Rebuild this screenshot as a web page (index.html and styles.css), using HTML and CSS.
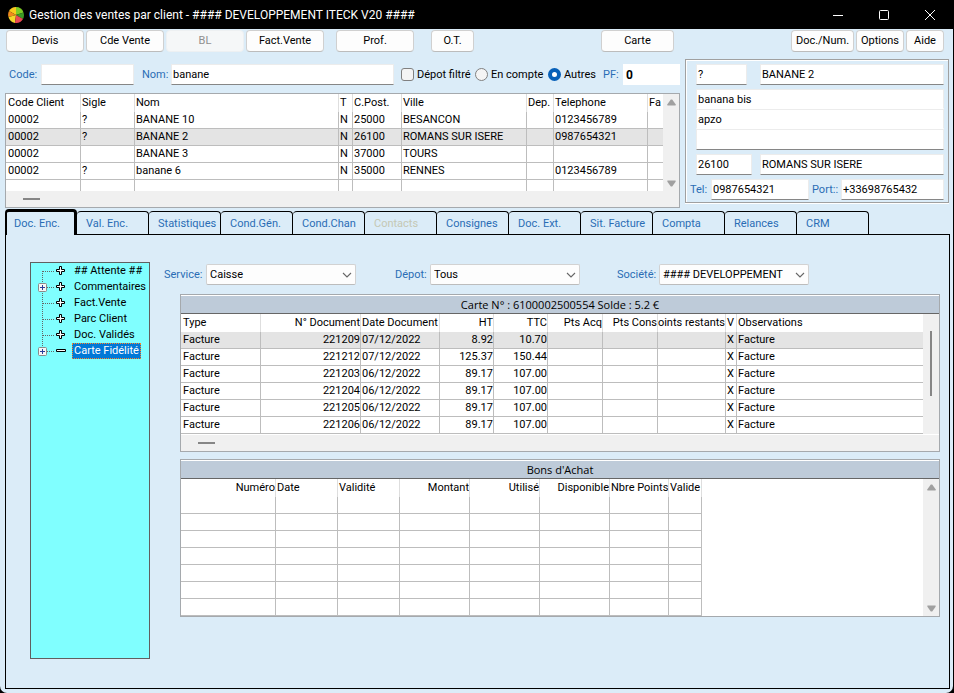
FILE: index.html
```html
<!DOCTYPE html>
<html lang="fr">
<head>
<meta charset="utf-8">
<title>Gestion des ventes par client</title>
<link rel="stylesheet" href="styles.css">
</head>
<body>
<svg class="defs" width="0" height="0" aria-hidden="true">
  <symbol id="chevron" viewBox="0 0 10 6"><path d="M1 1l4 4 4-4" fill="none" stroke="#666" stroke-width="1.1"/></symbol>
  <symbol id="arrow-up" viewBox="0 0 9 7"><path d="M3.8.6h1.4l3.4 4.6v1.2H.4V5.200z" fill="#a0a0a0"/></symbol>
  <symbol id="arrow-down" viewBox="0 0 9 7"><path d="M3.800 6.400h1.400L8.600 1.800V.6H.4v1.200z" fill="#a0a0a0"/></symbol>
  <symbol id="plus" viewBox="0 0 38 16"><path d="M28.500 3.500h2v3h3v2h-3v3h-2v-3h-3v-2h3z" fill="#fff" stroke="#000"/></symbol>
  <symbol id="minus" viewBox="0 0 38 16"><path d="M25.500 6.500h9v2h-9z" fill="#fff" stroke="#000"/></symbol>
  <symbol id="branch" viewBox="0 0 38 16"><path d="M12 8.500h11" stroke="#666" stroke-dasharray="1 1"/></symbol>
  <symbol id="down" viewBox="0 0 38 16"><path d="M11.500 8v8" stroke="#666" stroke-dasharray="1 1"/></symbol>
  <symbol id="up" viewBox="0 0 38 16"><path d="M11.500 0v8" stroke="#666" stroke-dasharray="1 1"/></symbol>
  <symbol id="box" viewBox="0 0 38 16"><rect x="7.500" y="4.500" width="8" height="8" rx="1" fill="#f6f6f6" stroke="#8a8a8a"/><path d="M9 8.500h5M11.500 6v5" stroke="#2a3f9a"/></symbol>
</svg>
<div class="window">
  <header class="titlebar">
    <svg class="logo" viewBox="0 0 16 16" aria-hidden="true">
      <path d="M8 8V0A8 8 0 0 0 1 4z" fill="#f7c81e"/><path d="M8 8L1 4a8 8 0 0 0-.5 6z" fill="#f08a1c"/>
      <path d="M8 8L.5 10A8 8 0 0 0 7 15.900z" fill="#f3d52a"/><path d="M8 8V0a8 8 0 0 1 7.500 5.500z" fill="#7ccb25"/>
      <path d="M8 8l7.500-2.500A8 8 0 0 1 15 12z" fill="#3c9a24"/><path d="M8 8l7 4a8 8 0 0 1-8 3.900z" fill="#ea4a54"/>
    </svg>
    <h1>Gestion des ventes par client - #### DEVELOPPEMENT ITECK V20 ####</h1>
    <div class="win-buttons">
      <button type="button" aria-label="Réduire"><svg viewBox="0 0 12 12"><path d="M1 6.500h10" stroke="#fff"/></svg></button>
      <button type="button" aria-label="Agrandir"><svg viewBox="0 0 12 12"><rect x="1.500" y="1.500" width="9" height="9" rx="1" fill="none" stroke="#fff"/></svg></button>
      <button type="button" aria-label="Fermer"><svg viewBox="0 0 12 12"><path d="M1 1l10 10M11 1L1 11" stroke="#fff"/></svg></button>
    </div>
  </header>
  <div class="client">
    <nav class="toolbar">
      <button type="button">Devis</button>
      <button type="button">Cde Vente</button>
      <button type="button" disabled>BL</button>
      <button type="button">Fact.Vente</button>
      <button type="button" class="prof">Prof.</button>
      <button type="button" class="ot">O.T.</button>
      <button type="button" class="carte">Carte</button>
      <button type="button" class="docnum">Doc./Num.</button>
      <button type="button" class="options">Options</button>
      <button type="button" class="aide">Aide</button>
    </nav>

    <div class="upper">
      <section class="search">
        <form class="filters">
          <label for="code" class="l-code">Code:</label><input id="code" class="code" type="text">
          <label for="nom" class="l-nom">Nom:</label><input id="nom" class="grow" type="text" value="banane">
          <label class="choice first"><input type="checkbox">Dépot filtré</label>
          <label class="choice second"><input type="radio" name="mode">En compte</label>
          <label class="choice third"><input type="radio" name="mode" checked>Autres</label>
          <label for="pf" class="l-pf">PF:</label><input id="pf" class="pf" type="text" value="0">
        </form>
        <div class="grid">
          <div class="body">
            <table class="clients">
              <colgroup><col class="w75"><col class="w54"><col><col class="w14"><col class="w49"><col class="w125"><col class="w27"><col class="w94"><col class="w15"></colgroup>
              <thead><tr><th>Code Client</th><th>Sigle</th><th>Nom</th><th>T</th><th>C.Post.</th><th>Ville</th><th>Dep.</th><th>Telephone</th><th>Fa</th></tr></thead>
              <tbody>
                <tr><td>00002</td><td>?</td><td>BANANE 10</td><td>N</td><td>25000</td><td>BESANCON</td><td></td><td>0123456789</td><td></td></tr>
                <tr class="sel"><td>00002</td><td>?</td><td>BANANE 2</td><td>N</td><td>26100</td><td>ROMANS SUR ISERE</td><td></td><td>0987654321</td><td></td></tr>
                <tr><td>00002</td><td></td><td>BANANE 3</td><td>N</td><td>37000</td><td>TOURS</td><td></td><td></td><td></td></tr>
                <tr><td>00002</td><td>?</td><td>banane 6</td><td>N</td><td>35000</td><td>RENNES</td><td></td><td>0123456789</td><td></td></tr>
                <tr class="cut"><td></td><td></td><td></td><td></td><td></td><td></td><td></td><td></td><td></td></tr>
              </tbody>
            </table>
            <div class="vbar"><svg><use href="#arrow-up"/></svg><svg><use href="#arrow-down"/></svg></div>
          </div>
          <div class="hbar"><i></i></div>
        </div>
      </section>

      <section class="card">
        <div class="line"><input class="sigle" type="text" value="?" aria-label="Sigle"><input class="grow" type="text" value="BANANE 2" aria-label="Nom du client"></div>
        <div class="address">
          <input type="text" value="banana bis" aria-label="Adresse 1">
          <input type="text" value="apzo" aria-label="Adresse 2">
          <input type="text" aria-label="Adresse 3">
        </div>
        <div class="line"><input class="cp" type="text" value="26100" aria-label="Code postal"><input class="grow" type="text" value="ROMANS SUR ISERE" aria-label="Ville"></div>
        <div class="phones">
          <label for="tel">Tel:</label><input id="tel" class="tel" type="text" value="0987654321">
          <label for="port" class="l-port">Port::</label><input id="port" class="grow" type="text" value="+33698765432">
        </div>
      </section>
    </div>

    <div class="tabs" role="tablist">
      <button type="button" role="tab" aria-selected="true">Doc. Enc.</button>
      <button type="button" role="tab">Val. Enc.</button>
      <button type="button" role="tab">Statistiques</button>
      <button type="button" role="tab">Cond.Gén.</button>
      <button type="button" role="tab">Cond.Chan</button>
      <button type="button" role="tab" disabled>Contacts</button>
      <button type="button" role="tab">Consignes</button>
      <button type="button" role="tab">Doc. Ext.</button>
      <button type="button" role="tab">Sit. Facture</button>
      <button type="button" role="tab">Compta</button>
      <button type="button" role="tab">Relances</button>
      <button type="button" role="tab">CRM</button>
    </div>

    <main class="panel">
      <ul class="tree">
        <li><svg><use href="#down"/><use href="#branch"/><use href="#plus"/></svg><span>## Attente ##</span></li>
        <li><svg><use href="#up"/><use href="#down"/><use href="#branch"/><use href="#box"/><use href="#plus"/></svg><span>Commentaires</span></li>
        <li><svg><use href="#up"/><use href="#down"/><use href="#branch"/><use href="#plus"/></svg><span>Fact.Vente</span></li>
        <li><svg><use href="#up"/><use href="#down"/><use href="#branch"/><use href="#plus"/></svg><span>Parc Client</span></li>
        <li><svg><use href="#up"/><use href="#down"/><use href="#branch"/><use href="#plus"/></svg><span>Doc. Validés</span></li>
        <li class="current"><svg><use href="#up"/><use href="#branch"/><use href="#box"/><use href="#minus"/></svg><span>Carte Fidélité</span></li>
      </ul>

      <div class="content">
        <form class="selects">
          <label for="service" class="l-service">Service:</label>
          <span class="select"><select id="service"><option>Caisse</option></select><svg><use href="#chevron"/></svg></span>
          <label for="depot" class="l-depot">Dépot:</label>
          <span class="select"><select id="depot"><option>Tous</option></select><svg><use href="#chevron"/></svg></span>
          <label for="societe" class="l-societe">Société:</label>
          <span class="select"><select id="societe"><option>#### DEVELOPPEMENT</option></select><svg><use href="#chevron"/></svg></span>
        </form>

        <section class="grid titled">
          <h2>Carte N° : 6100002500554 Solde : 5.2 €</h2>
          <div class="body">
            <table class="documents">
              <colgroup><col class="w80"><col class="w100"><col class="w79"><col class="w54"><col class="w54"><col class="w55"><col class="w55"><col class="w68"><col class="w11"><col></colgroup>
              <thead><tr><th>Type</th><th class="r">N° Document</th><th>Date Document</th><th class="r">HT</th><th class="r">TTC</th><th class="r">Pts Acq</th><th class="r">Pts Cons</th><th class="r"><span>Points restants</span></th><th>V</th><th>Observations</th></tr></thead>
              <tbody>
                <tr class="sel"><td>Facture</td><td class="r">221209</td><td>07/12/2022</td><td class="r">8.92</td><td class="r">10.70</td><td></td><td></td><td></td><td>X</td><td>Facture</td></tr>
                <tr><td>Facture</td><td class="r">221212</td><td>07/12/2022</td><td class="r">125.37</td><td class="r">150.44</td><td></td><td></td><td></td><td>X</td><td>Facture</td></tr>
                <tr><td>Facture</td><td class="r">221203</td><td>06/12/2022</td><td class="r">89.17</td><td class="r">107.00</td><td></td><td></td><td></td><td>X</td><td>Facture</td></tr>
                <tr><td>Facture</td><td class="r">221204</td><td>06/12/2022</td><td class="r">89.17</td><td class="r">107.00</td><td></td><td></td><td></td><td>X</td><td>Facture</td></tr>
                <tr><td>Facture</td><td class="r">221205</td><td>06/12/2022</td><td class="r">89.17</td><td class="r">107.00</td><td></td><td></td><td></td><td>X</td><td>Facture</td></tr>
                <tr><td>Facture</td><td class="r">221206</td><td>06/12/2022</td><td class="r">89.17</td><td class="r">107.00</td><td></td><td></td><td></td><td>X</td><td>Facture</td></tr>
              </tbody>
            </table>
            <div class="vbar thumb"><i></i></div>
          </div>
          <div class="hbar"><i></i></div>
        </section>

        <section class="grid titled">
          <h2>Bons d'Achat</h2>
          <div class="body">
            <table class="vouchers">
              <colgroup><col class="w95"><col class="w62"><col class="w62"><col class="w70"><col class="w70"><col class="w70"><col class="w59"><col class="w33"></colgroup>
              <thead><tr><th class="r">Numéro</th><th>Date</th><th>Validité</th><th class="r">Montant</th><th class="r">Utilisé</th><th class="r">Disponible</th><th>Nbre Points</th><th>Valide</th></tr></thead>
              <tbody>
                <tr><td></td><td></td><td></td><td></td><td></td><td></td><td></td><td></td></tr>
                <tr><td></td><td></td><td></td><td></td><td></td><td></td><td></td><td></td></tr>
                <tr><td></td><td></td><td></td><td></td><td></td><td></td><td></td><td></td></tr>
                <tr><td></td><td></td><td></td><td></td><td></td><td></td><td></td><td></td></tr>
                <tr><td></td><td></td><td></td><td></td><td></td><td></td><td></td><td></td></tr>
                <tr><td></td><td></td><td></td><td></td><td></td><td></td><td></td><td></td></tr>
                <tr><td></td><td></td><td></td><td></td><td></td><td></td><td></td><td></td></tr>
              </tbody>
            </table>
            <div class="vbar"><svg><use href="#arrow-up"/></svg><svg><use href="#arrow-down"/></svg></div>
          </div>
        </section>
      </div>
    </main>
  </div>
</div>
</body>
</html>
```
FILE: styles.css
```css
* { box-sizing: border-box; }

body {
  margin: 0;
  background: #000;
  color: #000;
  font: 11px/16px Roboto, "Liberation Sans", sans-serif;
}

button, input, select { font: inherit; color: inherit; margin: 0; }
.defs { position: absolute; }

.window { min-height: 100vh; display: flex; flex-direction: column; }

/* Title bar */
.titlebar { height: 29px; display: flex; align-items: center; padding: 0 1px 0 8px; color: #fff; }
.logo { width: 16px; height: 16px; margin-right: 5px; }
.titlebar h1 { flex: 1; margin: 0; font: 12px/16px Roboto, "Liberation Sans", sans-serif; white-space: nowrap; overflow: hidden; }
.win-buttons { display: flex; }
.win-buttons button { width: 46px; height: 28px; padding: 0; border: 0; background: none; display: flex; align-items: center; justify-content: center; }
.win-buttons svg { width: 12px; height: 12px; }

.client {
  flex: 1;
  display: flex;
  flex-direction: column;
  margin-right: 1px;
  padding: 1px 3px 4px 5px;
  background: #dbecf8;
  border-radius: 0 0 7px 7px;
}

/* Toolbar */
.toolbar { display: flex; gap: 2px; padding: 0 6px 0 1px; }
.toolbar button {
  width: 78px;
  height: 22px;
  padding: 0;
  border: 1px solid #d0d0d0;
  border-bottom-color: #bcbcbc;
  border-radius: 4px;
  background: #fdfdfd;
}
.toolbar button:disabled { color: #8f8f8f; background: #f5f7f8; border-color: #edf0f2; }
.toolbar .prof { margin-left: 10px; }
.toolbar .ot { width: 43px; margin-left: 15px; }
.toolbar .carte { width: 73px; margin-left: auto; }
.toolbar .docnum { width: 63px; margin-left: 115px; }
.toolbar .options { width: 48px; }
.toolbar .aide { width: 38px; }

/* Text fields */
label { color: #2a6cb5; white-space: nowrap; }
input[type="text"] {
  height: 21px;
  min-width: 0;
  padding: 0 1px;
  border: 1px solid #ececec;
  border-bottom-color: #868686;
  border-radius: 0;
  background: #fff;
}
.grow { flex: 1; }

.upper { display: flex; gap: 5px; padding: 7px 1px 1px 0; }
.search { flex: 1; min-width: 0; padding-top: 5px; }

.filters { display: flex; align-items: center; margin-bottom: 8px; }
.l-code { width: 36px; padding-left: 4px; }
.code { width: 93px; }
.l-nom { width: 37px; padding-left: 8px; }
.choice { display: flex; align-items: center; gap: 3px; color: #000; }
.first { width: 74px; margin-left: 7px; }
.second { width: 73px; }
.third { width: 55px; }
.l-pf { width: 20px; }
.filters input.pf { width: 57px; padding: 0 2px; border-color: #fff; font-weight: bold; font-size: 12px; }

input[type="checkbox"], input[type="radio"] {
  appearance: none;
  flex: none;
  width: 13px;
  height: 13px;
  border: 1px solid #808080;
  border-radius: 3px;
  background: #f4f4f4;
}
input[type="radio"] { border-radius: 50%; }
input[type="radio"]:checked { border: 4px solid #0860b8; background: #fff; }

/* Client card */
.card {
  width: 264px;
  padding: 4px 4px 2px;
  border: 1px solid #a0a0a0;
  box-shadow: inset 1px 1px #fff, 0 1px #fff;
  margin-bottom: 5px;
}
.line { display: flex; gap: 8px; padding-left: 6px; }
.line .sigle { width: 51px; margin-right: 5px; }
.line .cp { width: 56px; }
.address { display: flex; flex-direction: column; margin: 4px 0 4px 6px; }
.address input[type="text"] { height: 20px; border-bottom-color: #fff; }
.address input[type="text"]:last-child { height: 21px; border-bottom-color: #868686; }
.phones { display: flex; align-items: center; margin-top: 4px; }
.phones label { width: 21px; }
.phones .tel { width: 98px; }
.phones .l-port { width: 32px; padding-left: 3px; }

/* Data grids */
.grid { border: 1px solid #a5a9ad; background: #fff; }
.body { display: flex; }
table { border-collapse: separate; border-spacing: 0; table-layout: fixed; }
.clients, .documents { flex: 1; width: 100%; min-width: 0; }
.vouchers { width: 521px; margin-right: auto; }
th, td { height: 17px; padding: 0 1px; line-height: 16px; text-align: left; white-space: nowrap; overflow: hidden; }
th:first-child, td:first-child { padding-left: 2px; }
th { height: 18px; font-weight: normal; border-right: 1px solid #dedede; }
td { border-right: 1px solid #bdbdbd; border-bottom: 1px solid #bdbdbd; }
.clients tr > :last-child, .documents tr > :last-child { border-right: 0; }
.sel td { background: #e4e4e4; }
.cut td { height: 11px; border-bottom: 0; }
.r { text-align: right; padding: 0; }
.r span { display: flex; justify-content: flex-end; overflow: hidden; }

.w11 { width: 11px; }
.w14 { width: 14px; }
.w15 { width: 15px; }
.w27 { width: 27px; }
.w33 { width: 33px; }
.w49 { width: 49px; }
.w54 { width: 54px; }
.w55 { width: 55px; }
.w59 { width: 59px; }
.w62 { width: 62px; }
.w68 { width: 68px; }
.w70 { width: 70px; }
.w75 { width: 75px; }
.w79 { width: 79px; }
.w80 { width: 80px; }
.w94 { width: 94px; }
.w95 { width: 95px; }
.w100 { width: 100px; }
.w125 { width: 125px; }

.vbar { flex: none; width: 16px; padding: 5px 0 4px; display: flex; flex-direction: column; justify-content: space-between; align-items: center; background: #f0f0f0; }
.vbar svg { width: 9px; height: 7px; }
.vbar.thumb { padding-top: 17px; }
.vbar i { width: 2px; height: 65px; background: #868686; }
.hbar { height: 16px; padding: 7px 0 0 17px; background: #f0f0f0; }
.hbar i { display: block; width: 17px; height: 2px; background: #868686; }

.titled { padding-top: 1px; }
.titled h2 {
  height: 18px;
  margin: 0;
  border-bottom: 1px solid #666;
  background: #becbd9;
  font: 11px/17px "Open Sans", "Noto Sans", sans-serif;
  text-align: center;
}
.titled .hbar { margin-top: 1px; }

/* Tabs */
.tabs { display: flex; align-items: flex-end; height: 25px; }
.tabs button {
  flex: 0 1 72px;
  height: 23px;
  padding: 1px 0 0 9px;
  border: solid #000;
  border-width: 1px 1px 0 0;
  border-radius: 4px 4px 0 0;
  background: none;
  color: #2a6cb5;
  text-align: left;
  white-space: nowrap;
}
.tabs button:disabled { color: #c5c8b4; }
.tabs [aria-selected="true"] {
  height: 26px;
  margin-bottom: -1px;
  padding: 1px 0 0 7px;
  border-width: 3px 3px 0 2px;
  background: #dbecf8;
  z-index: 1;
}

.panel { flex: 1; display: flex; gap: 30px; padding: 27px 9px 29px 24px; border: 1px solid #000; }

/* Tree */
.tree { flex: none; width: 120px; margin: 0; padding: 0; list-style: none; border: 1px solid #606060; background: #80ffff; }
.tree li { display: flex; height: 16px; }
.tree svg { width: 38px; height: 16px; margin-right: 3px; }
.tree span { padding: 0 2px; white-space: nowrap; }
.tree .current span { background: #0078d7; color: #fff; outline: 1px dotted #ff8728; outline-offset: -1px; }

/* Detail */
.content { flex: 1; min-width: 0; padding-top: 2px; display: flex; flex-direction: column; gap: 7px; }
.selects { display: flex; align-items: center; margin: 0 0 2px -16px; }
.select { flex: 0 1 150px; position: relative; }
.select select {
  display: block;
  appearance: none;
  width: 100%;
  height: 21px;
  padding: 0 18px 0 3px;
  border: 1px solid #d2d2d2;
  border-bottom-color: #bcbcbc;
  border-radius: 2px;
  background: #fdfdfd;
}
.select svg { position: absolute; right: 4px; top: 8px; width: 10px; height: 6px; pointer-events: none; }
.l-service { width: 42px; }
.l-depot { width: 74px; padding-left: 39px; }
.l-societe { width: 79px; padding-left: 37px; }
```
